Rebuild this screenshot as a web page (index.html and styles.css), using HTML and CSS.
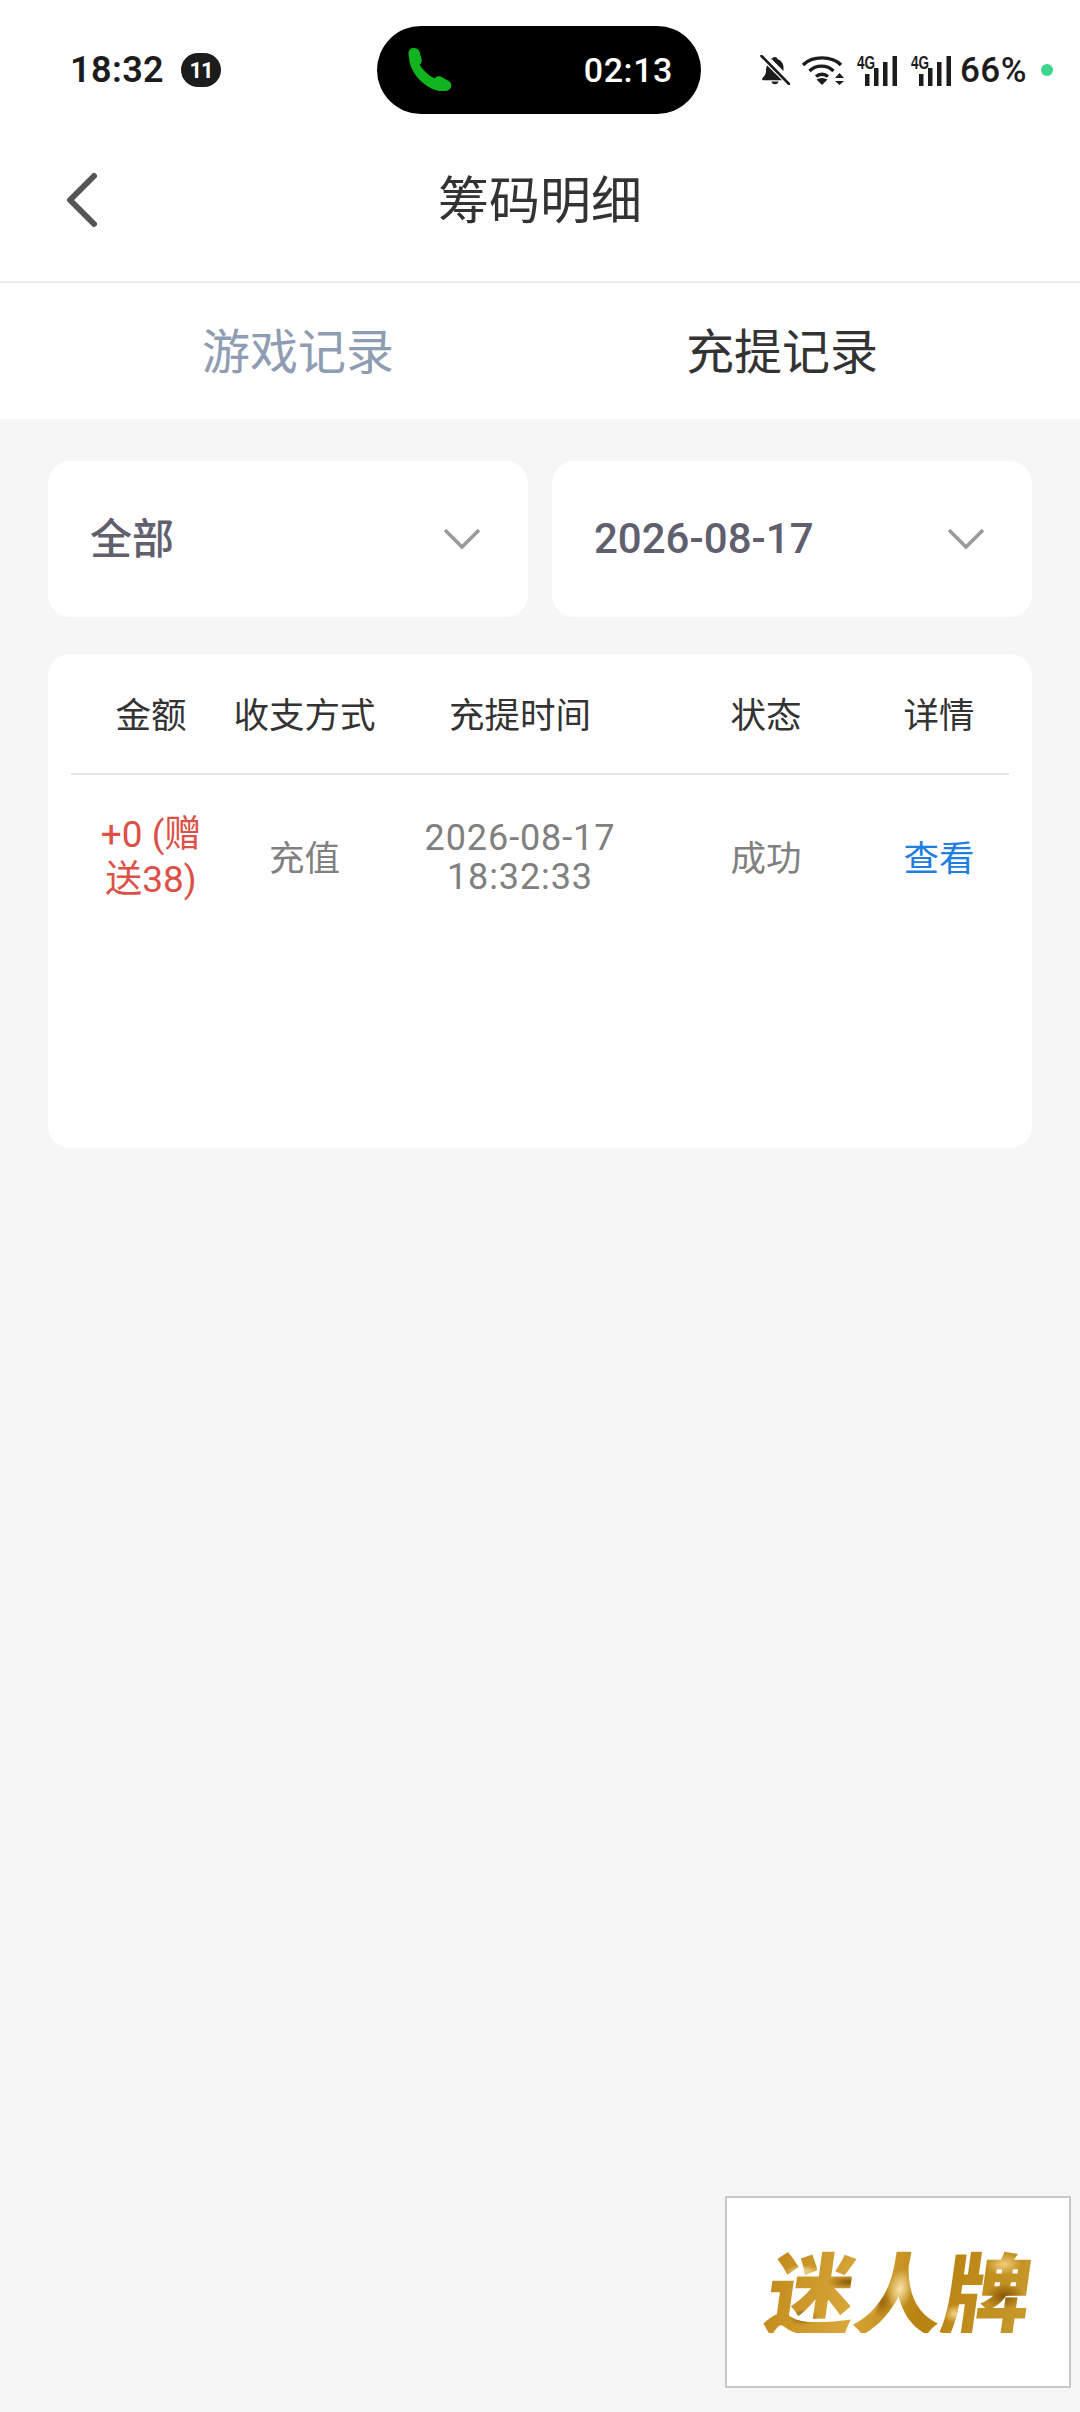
FILE: index.html
```html
<!DOCTYPE html>
<html lang="zh-CN">
<head>
<meta charset="utf-8">
<title>筹码明细</title>
<link rel="stylesheet" href="styles.css">
</head>
<body>
<div class="page">
  <div class="top">
    <div class="status">
      <div class="status-left">
        <span class="clock">18:32</span>
        <span class="badge">11</span>
      </div>
      <div class="call">
        <svg class="phone" width="44" height="44" viewBox="0 0 45 45"><path d="M.5 6C.5 2 3 0 6 0c3 0 5.500 2 6 4l2 8c.5 2-.5 4-2 5 1 3 8 11 15 14 2-2 4-2.500 6-2l9 5c2 1 2.500 4 2 6-1 2.500-3 4-6 4-6 .5-12-1-18-5C10 33 3 22 1.500 14z" fill="#10b41f"/></svg>
        <span class="call-time">02:13</span>
      </div>
      <div class="status-right">
        <svg class="bell" width="30" height="30" viewBox="0 0 30 30"><path d="M15 2c1.500 0 2.500 1 2.700 2.300 3.800 1.200 5.800 4.500 5.800 8.200v3.500l-13-13C11.500 3.700 12 3.300 12.300 3.500 12.500 2.800 13.500 2 15 2zM7.200 10.500 22 25.300H3.500c-1.200 0-1.800-1.300-1-2.300 2-2 3.500-3.500 3.500-7.500 0-2 .4-3.800 1.200-5zM11.500 26.500h7c-.3 1.700-1.800 2.800-3.500 2.800s-3.200-1.100-3.500-2.800z" fill="#1c1c1c"/><path d="M1.500 1 29 29" stroke="#1c1c1c" stroke-width="2.600" stroke-linecap="round"/></svg>
        <svg class="wifi" width="42" height="30" viewBox="0 0 42 30"><g fill="none" stroke="#1c1c1c" stroke-width="3.400"><path d="M1 10C10 .5 30 .5 39 10"/><path d="M7.500 16C14 9.500 25 9.500 31.500 16"/><path d="M14 21.500c3.500-3 8.500-3 12 0"/></g><path d="M14.500 24.500c3.500-2 7.500-2 11 0L20 30z" fill="#1c1c1c"/><path d="M37.500 18l4.500 5h-9zM37.500 30l-4.500-4h9z" fill="#1c1c1c"/></svg>
        <svg class="signal" width="41" height="31" viewBox="0 0 41 31"><text x="0" y="14" class="net" textLength="18" lengthAdjust="spacingAndGlyphs">4G</text><rect x="8" y="19" width="4.500" height="12" /><rect x="17" y="13" width="4.500" height="18" /><rect x="26" y="7" width="4.500" height="24" /><rect x="35.500" y="1" width="4.500" height="30" /></svg>
        <svg class="signal" width="41" height="31" viewBox="0 0 41 31"><text x="0" y="14" class="net" textLength="18" lengthAdjust="spacingAndGlyphs">4G</text><rect x="8" y="19" width="4.500" height="12" /><rect x="17" y="13" width="4.500" height="18" /><rect x="26" y="7" width="4.500" height="24" /><rect x="35.500" y="1" width="4.500" height="30" /></svg>
        <span class="battery">66%</span>
        <span class="dot"></span>
      </div>
    </div>
    <header class="nav">
      <svg class="back" width="34" height="56" viewBox="0 0 34 56"><path d="M29 4 5 28l24 24" fill="none" stroke="#555" stroke-width="6" stroke-linecap="round" stroke-linejoin="round"/></svg>
      <h1 class="title">筹码明细</h1>
    </header>
  </div>

  <nav class="tabs">
    <div class="tab tab-muted">游戏记录</div>
    <div class="tab">充提记录</div>
  </nav>

  <main class="content">
    <section class="filters">
      <div class="select">
        <span class="select-cjk">全部</span>
        <svg width="38" height="24" viewBox="0 0 38 24"><path d="M2 3l17 17L36 3" fill="none" stroke="#999" stroke-width="3.500"/></svg>
      </div>
      <div class="select">
        <span class="select-date">2026-08-17</span>
        <svg width="38" height="24" viewBox="0 0 38 24"><path d="M2 3l17 17L36 3" fill="none" stroke="#999" stroke-width="3.500"/></svg>
      </div>
    </section>

    <section class="card">
      <div class="row head">
        <div>金额</div>
        <div>收支方式</div>
        <div>充提时间</div>
        <div>状态</div>
        <div>详情</div>
      </div>
      <div class="row body">
        <div class="amount">+0 (赠<br>送38)</div>
        <div>充值</div>
        <div class="time">2026-08-17<br>18:32:33</div>
        <div>成功</div>
        <div class="link">查看</div>
      </div>
    </section>
  </main>

  <aside class="logo"><span class="logo-text">迷人牌</span></aside>
</div>
</body>
</html>
```

FILE: styles.css
```css
* { box-sizing: border-box; }
html, body { margin: 0; padding: 0; }
body {
  width: 1080px;
  height: 2412px;
  overflow: hidden;
  background: #f6f6f6;
  font-family: "Noto Sans CJK SC", Roboto, sans-serif;
}
.page { position: relative; width: 1080px; height: 2412px; }

.top { background: #fff; border-bottom: 2px solid #ececec; height: 283px; }
.status {
  height: 140px;
  display: flex;
  align-items: center;
  padding: 0 27px 0 70px;
}
.status-left { width: 307px; display: flex; align-items: center; gap: 17px; }
.clock {
  font-family: Roboto, sans-serif;
  font-size: 36px;
  font-weight: 600;
  color: #1c1c1c;
  letter-spacing: 0.4px;
}
.badge {
  width: 40px;
  height: 34px;
  border-radius: 17px;
  background: #1c1c1c;
  color: #fff;
  font-family: Roboto, sans-serif;
  font-size: 22px;
  font-weight: 700;
  letter-spacing: -1px;
  display: flex;
  align-items: center;
  justify-content: center;
}
.call {
  width: 324px;
  height: 88px;
  border-radius: 44px;
  background: #000;
  display: flex;
  align-items: center;
  justify-content: space-between;
  padding: 0 28px 0 31px;
}
.phone { display: block; }
.call-time {
  font-family: Roboto, sans-serif;
  font-size: 34px;
  font-weight: 500;
  color: #fff;
  letter-spacing: 0.6px;
}
.status-right {
  margin-left: auto;
  display: flex;
  align-items: center;
}
.bell { display: block; }
.wifi { display: block; margin-left: 12px; }
.signal { display: block; margin-left: 13px; fill: #1c1c1c; overflow: visible; }
.net {
  font-family: "Liberation Sans", sans-serif;
  font-size: 18px;
  font-weight: 700;
}
.battery {
  margin-left: 8px;
  font-family: Roboto, sans-serif;
  font-size: 35px;
  font-weight: 500;
  color: #1c1c1c;
  letter-spacing: 0.5px;
}
.dot {
  margin-left: 14px;
  width: 12px;
  height: 12px;
  border-radius: 50%;
  background: #3dd68c;
}

.nav {
  position: relative;
  height: 141px;
  padding-bottom: 25px;
  display: flex;
  align-items: center;
  justify-content: center;
}
.back { position: absolute; left: 65px; top: 32px; }
.title {
  margin: 0;
  font-size: 51px;
  font-weight: 400;
  color: #333;
  line-height: 1.2;
}

.tabs {
  height: 136px;
  background: #fff;
  display: flex;
  padding: 0 56px 6px;
}
.tab {
  flex: 1;
  display: flex;
  align-items: center;
  justify-content: center;
  font-size: 48px;
  color: #333;
}
.tab-muted { color: #8f9db2; }

.content {
  padding: 42px 48px 0;
  display: flex;
  flex-direction: column;
  gap: 37px;
}
.filters { display: flex; gap: 24px; }
.select {
  flex: 1;
  height: 156px;
  border-radius: 22px;
  background: #fff;
  display: flex;
  align-items: center;
  justify-content: space-between;
  padding: 0 47px 0 42px;
  color: #5f5f6e;
  font-size: 42px;
}
.select-cjk { line-height: 1; padding-bottom: 6px; font-weight: 500; }
.select-date {
  font-family: Roboto, sans-serif;
  font-weight: 500;
  font-size: 42px;
  padding-bottom: 2px;
}

.card {
  height: 494px;
  border-radius: 22px;
  background: #fff;
  padding: 0 23px;
}
.row {
  display: grid;
  grid-template-columns: 160px 147px 284px 208px 138px;
  text-align: center;
  align-items: center;
  font-size: 35.5px;
}
.head {
  height: 121px;
  padding-bottom: 3px;
  color: #333;
  border-bottom: 2px solid #e6e6e6;
}
.body {
  height: 160px;
  color: #808080;
}
.amount {
  color: #dc5046;
  line-height: 45px;
  padding-top: 4px;
  font-family: Roboto, "Noto Sans CJK SC", sans-serif;
  font-size: 37px;
}
.time {
  font-family: Roboto, sans-serif;
  font-size: 36px;
  letter-spacing: 0.9px;
  line-height: 39px;
  padding-top: 6px;
}
.link { color: #1f7fe0; }

.logo {
  position: absolute;
  left: 725px;
  top: 2196px;
  width: 346px;
  height: 192px;
  padding: 0 0 6px 4px;
  background: #fff;
  border: 2px solid #c8c8c8;
  display: flex;
  align-items: center;
  justify-content: center;
}
.logo-text {
  font-size: 88px;
  font-weight: 900;
  line-height: 1;
  transform: skewX(-8deg);
  color: transparent;
  background:
    radial-gradient(ellipse 22px 8px at 12% 30%, #f8e2a0, transparent 80%),
    radial-gradient(ellipse 26px 9px at 30% 42%, #8a5a08, transparent 80%),
    radial-gradient(ellipse 18px 12px at 38% 70%, #f3d98c, transparent 80%),
    radial-gradient(ellipse 16px 26px at 50% 50%, #fae7ad, transparent 80%),
    radial-gradient(ellipse 14px 20px at 44% 65%, #9a650c, transparent 80%),
    radial-gradient(ellipse 20px 10px at 62% 40%, #8f5e0a, transparent 80%),
    radial-gradient(ellipse 22px 14px at 88% 22%, #f0cf7c, transparent 80%),
    radial-gradient(ellipse 24px 16px at 90% 58%, #855506, transparent 80%),
    radial-gradient(ellipse 18px 10px at 15% 82%, #7f5206, transparent 80%),
    radial-gradient(ellipse 14px 12px at 72% 78%, #f2d587, transparent 80%),
    linear-gradient(100deg, #c08a1a, #d9a73a 35%, #b8810f 60%, #c99a2e);
  -webkit-background-clip: text;
  background-clip: text;
}
```
